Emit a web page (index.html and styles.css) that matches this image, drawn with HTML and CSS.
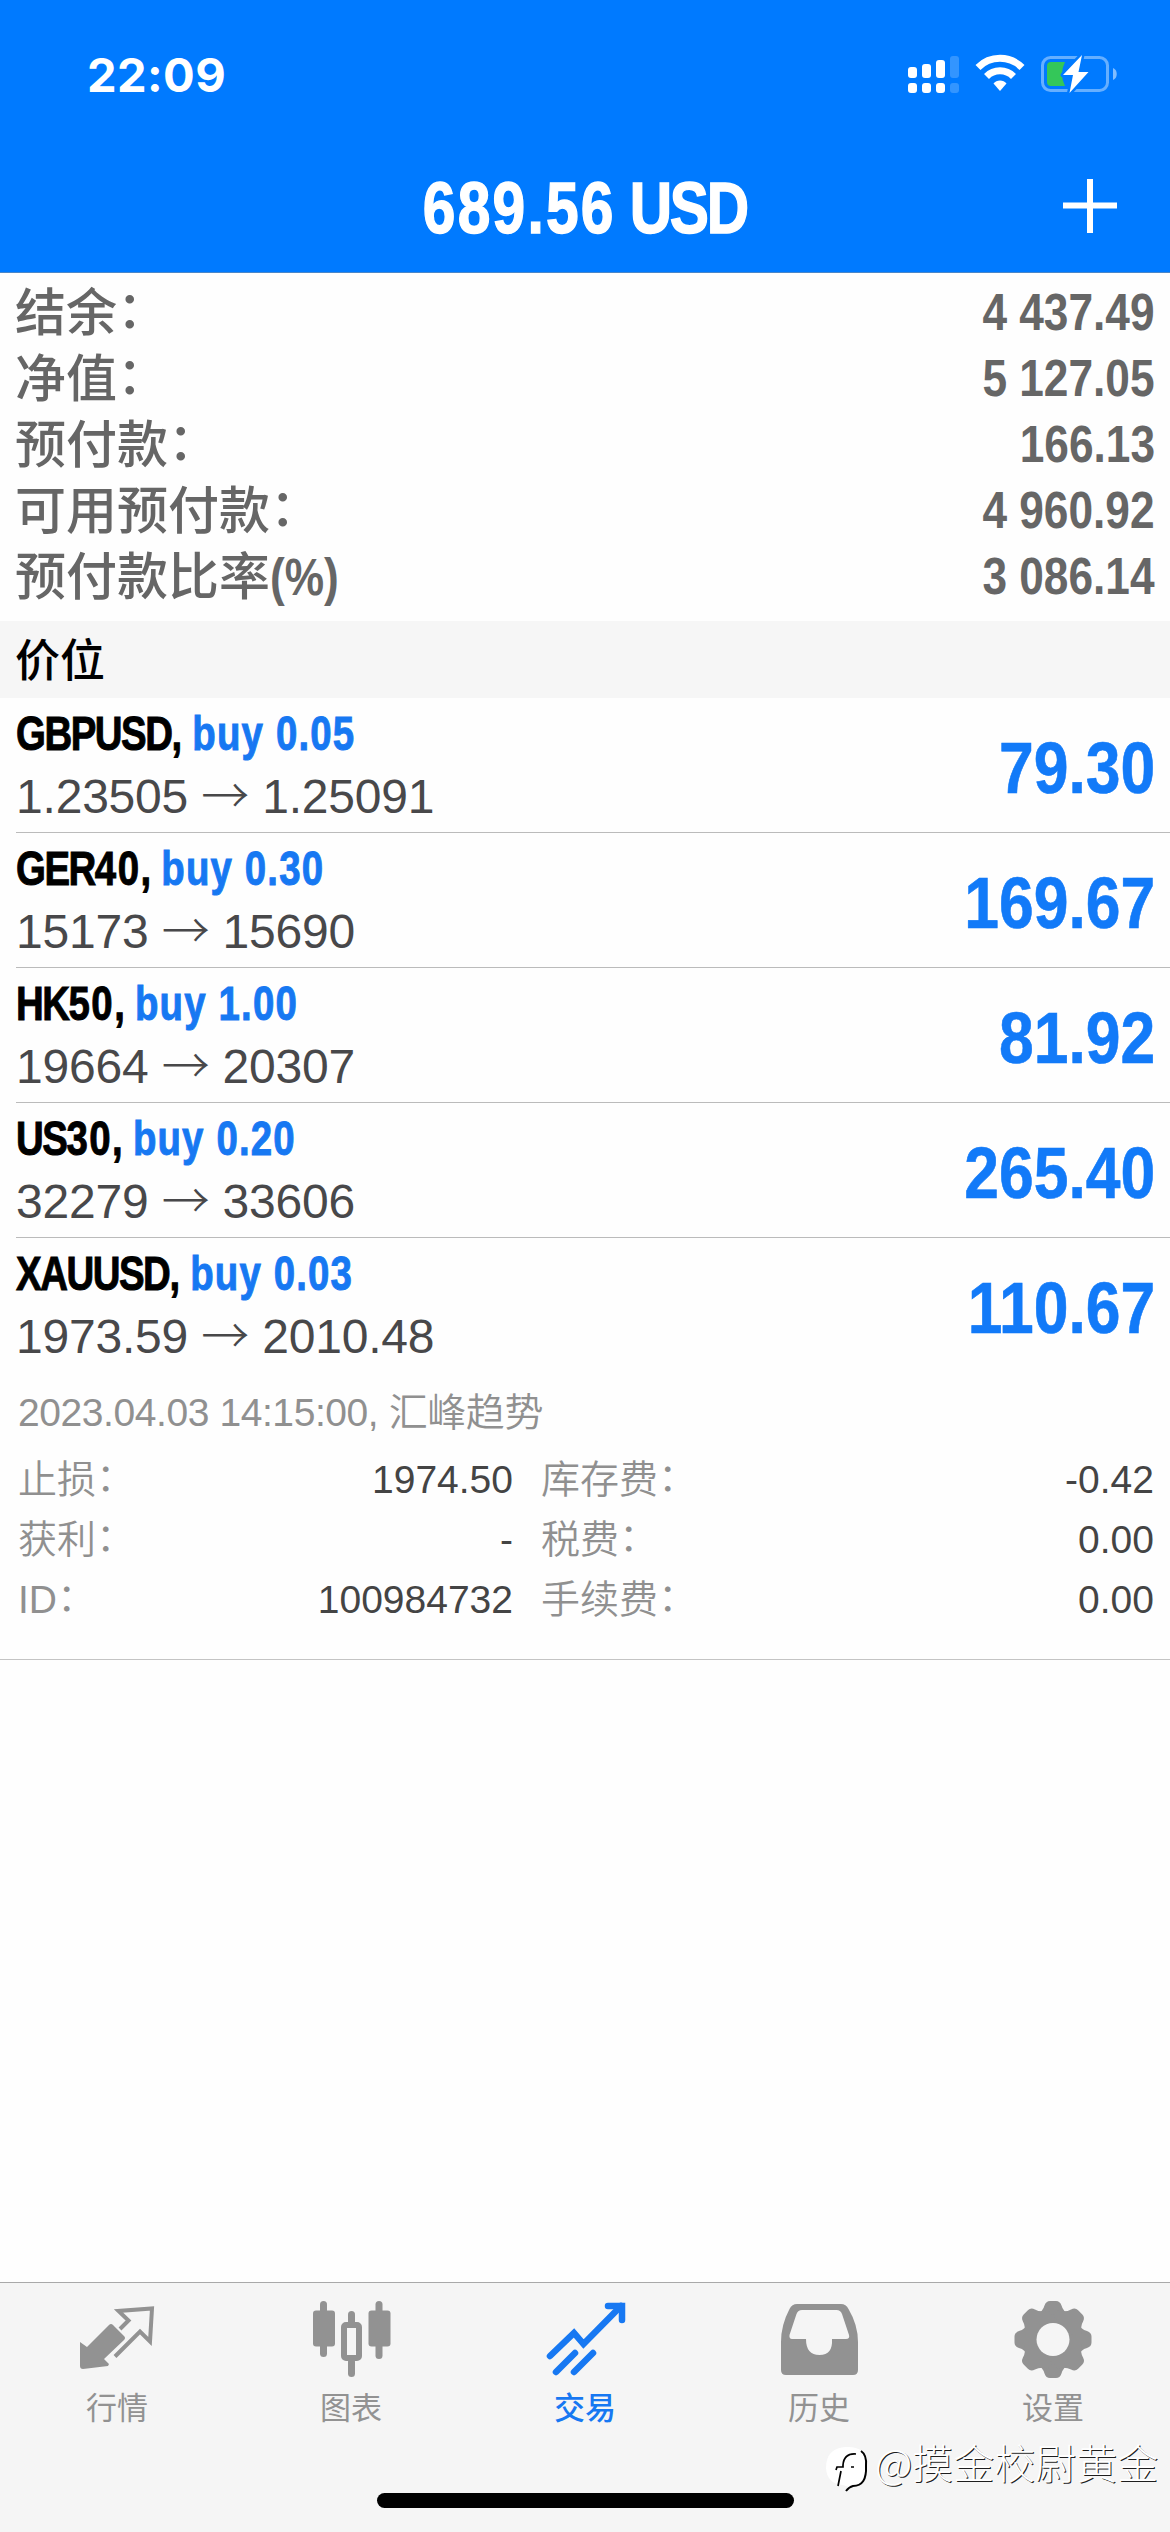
FILE: index.html
```html
<!DOCTYPE html>
<html lang="zh-CN">
<head>
<meta charset="utf-8">
<title>交易</title>
<link rel="stylesheet" href="styles.css">
</head>
<body>
<div class="screen">
  <header class="top">
    <div class="status">
      <span class="time">22:09</span>
      <svg class="status-icons" width="222" height="48" viewBox="0 0 222 48">
        <g fill="#fff">
          <rect x="2" y="15" width="9" height="11" rx="3"/><rect x="16" y="12" width="9" height="14" rx="3"/><rect x="30" y="8" width="9" height="18" rx="3"/>
          <rect x="2" y="31" width="9" height="10" rx="3"/><rect x="16" y="31" width="9" height="10" rx="3"/><rect x="30" y="31" width="9" height="10" rx="3"/>
          <g opacity=".2"><rect x="44" y="4" width="9" height="22" rx="3"/><rect x="44" y="31" width="9" height="10" rx="3"/></g>
        </g>
        <g fill="none" stroke="#fff" stroke-width="7"><path d="M72 15.500a31 31 0 0 1 44 0"/><path d="M80.500 24.500a19 19 0 0 1 27 0"/></g>
        <path d="M94 39l-6.500-7.500c3-4 10-4 13 0z" fill="#fff"/>
        <rect x="136.500" y="5.500" width="65" height="33" rx="8" fill="none" stroke="#fff" stroke-opacity=".4" stroke-width="3"/>
        <path d="M207 16c5 1.500 5 10.500 0 12z" fill="#fff" fill-opacity=".5"/>
        <path d="M145 10h14q-6 12 0 24h-14q-4 0-4-4v-16q0-4 4-4z" fill="#34c759"/>
        <path d="M176 3l-19 20h10l-3.500 18 19-21h-10z" fill="#fff" stroke="#007aff" stroke-width="5" paint-order="stroke" stroke-linejoin="round"/>
      </svg>
    </div>
    <div class="nav">
      <h1 class="title"><span class="mix"><span class="num">689.56</span> USD</span></h1>
      <svg class="plus" width="54" height="54" viewBox="0 0 54 54"><path d="M0 26.500h54M27 0v54" stroke="#fff" stroke-width="6"/></svg>
    </div>
  </header>

  <dl class="summary">
    <div><dt>结余<span class="c">：</span></dt><dd><span class="cond">4 437.49</span></dd></div>
    <div><dt>净值<span class="c">：</span></dt><dd><span class="cond">5 127.05</span></dd></div>
    <div><dt>预付款<span class="c">：</span></dt><dd><span class="cond">166.13</span></dd></div>
    <div><dt>可用预付款<span class="c">：</span></dt><dd><span class="cond">4 960.92</span></dd></div>
    <div><dt>预付款比率<span class="cond pct">(%)</span></dt><dd><span class="cond">3 086.14</span></dd></div>
  </dl>

  <h2 class="section">价位</h2>

  <ul class="positions">
    <li class="row"><div class="info"><p class="sym"><span class="mix">GBPUSD, <b>buy 0.05</b></span></p><p class="px">1.23505 <i>→</i> 1.25091</p></div><div class="profit"><span class="cond">79.30</span></div></li>
    <li class="row"><div class="info"><p class="sym"><span class="mix">GER<span class="num">40</span>, <b>buy 0.30</b></span></p><p class="px">15173 <i>→</i> 15690</p></div><div class="profit"><span class="cond">169.67</span></div></li>
    <li class="row"><div class="info"><p class="sym"><span class="mix">HK<span class="num">50</span>, <b>buy 1.00</b></span></p><p class="px">19664 <i>→</i> 20307</p></div><div class="profit"><span class="cond">81.92</span></div></li>
    <li class="row"><div class="info"><p class="sym"><span class="mix">US<span class="num">30</span>, <b>buy 0.20</b></span></p><p class="px">32279 <i>→</i> 33606</p></div><div class="profit"><span class="cond">265.40</span></div></li>
    <li class="row last"><div class="info"><p class="sym"><span class="mix">XAUUSD, <b>buy 0.03</b></span></p><p class="px">1973.59 <i>→</i> 2010.48</p></div><div class="profit"><span class="cond">110.67</span></div></li>
  </ul>

  <section class="details">
    <p class="opened">2023.04.03 14:15:00, <span class="cn">汇峰趋势</span></p>
    <div class="grid">
      <span class="k">止损<span class="c">：</span></span><span class="v">1974.50</span><span class="k">库存费<span class="c">：</span></span><span class="v">-0.42</span>
      <span class="k">获利<span class="c">：</span></span><span class="v">-</span><span class="k">税费<span class="c">：</span></span><span class="v">0.00</span>
      <span class="k">ID<span class="c">：</span></span><span class="v">100984732</span><span class="k">手续费<span class="c">：</span></span><span class="v">0.00</span>
    </div>
  </section>

  <nav class="tabs">
    <a class="tab"><svg width="78" height="78" viewBox="0 0 78 78"><path d="M2 35l7 5 22-22q2-2 4 0l11 11q2 2 0 4L26 52l5 5-1 2-25 3q-3 0-3-3z" fill="#929292"/><path d="M42 22l8.500-8.500-10-9.500 33.500-2.500-2 33-10-10-25 25" fill="none" stroke="#929292" stroke-width="4"/></svg><span>行情</span></a>
    <a class="tab"><svg width="78" height="78" viewBox="0 0 78 78"><g fill="#929292"><rect x="8" y="-6" width="7" height="56" rx="3.500"/><rect x="1" y="3.500" width="22" height="36" rx="3"/><rect x="63.500" y="-6" width="7" height="58" rx="3.500"/><rect x="56.500" y="3.500" width="22" height="36" rx="3"/><rect x="36" y="4" width="7" height="14" rx="3.500"/><rect x="36" y="51" width="7" height="19" rx="3.500"/></g><rect x="32" y="18" width="15" height="33" rx="2" fill="none" stroke="#929292" stroke-width="6"/></svg><span>图表</span></a>
    <a class="tab on"><svg width="78" height="78" viewBox="0 0 78 78"><g fill="none" stroke="#1778f2" stroke-width="6.500" stroke-linecap="round"><path d="M4 49L28 26l9.500 11L75 -1"/><path d="M62-1h14v14"/><path d="M10 65l19-19M28 65l19-19"/></g></svg><span>交易</span></a>
    <a class="tab"><svg width="78" height="78" viewBox="0 0 78 78"><path fill-rule="evenodd" fill="#929292" d="M17-3h44q5 0 7.500 5Q78 18 78 35v28q0 5-5 5H6q-5 0-5-5V35Q1 18 9.500 2 12-3 17-3zM22 3q-4 0-5.500 4L9.500 28Q9 32 12 32h14q0 16 13.500 16T52 32h14q4 0 3-4L62 7q-1.500-4-5.500-4z"/></svg><span>历史</span></a>
    <a class="tab"><svg width="78" height="78" viewBox="-39 -32.500 78 78"><g fill="#929292"><path id="t" d="M-17-24Q-10-28-8.500-34-7-38.500-3-38.500H3Q7-38.500 8.500-34 10-28 17-24V24Q10 28 8.500 34 7 38.500 3 38.500H-3Q-7 38.500-8.500 34-10 28-17 24z"/><use href="#t" transform="rotate(90)"/><use href="#t" transform="rotate(45)"/><use href="#t" transform="rotate(135)"/></g><circle r="16.500" fill="#f5f5f5"/></svg><span>设置</span></a>
  </nav>
  <div class="home"></div>
  <div class="mark"><svg width="44" height="48" viewBox="0 0 44 48"><path d="M20 1Q41 0 41 19v8q0 9-10 13l-8 1-6-2Q1 38 0 22 0 2 20 1z" fill="#fff"/><path d="M35 5q6 4 5 15 1 20-13 20-4 1-7 5" fill="none" stroke="#000" stroke-width="2"/><path d="M30 8q-12-1-13 11v2h-6l-1 3M15 25l-3 15M25 21h3" fill="none" stroke="#000" stroke-width="1.700"/></svg><span>@摸金校尉黄金</span></div>
</div>
</body>
</html>
```
FILE: styles.css
```css
* { box-sizing: border-box; margin: 0; padding: 0; }
body { width: 1170px; background: #fefefe; font-family: "Liberation Sans", "Noto Sans CJK SC", sans-serif; }
.screen { position: relative; width: 1170px; height: 2532px; display: flex; flex-direction: column; background: #fefefe; overflow: hidden; }

/* condensed bold: figures, and words mixed with figures */
.cond { display: inline-block; transform: scaleX(.867); transform-origin: 100% 50%; font-weight: 700; white-space: pre; }
.mix { display: inline-block; transform: scaleX(.8); transform-origin: 0 50%; font-weight: 700; letter-spacing: -.038em; white-space: pre; -webkit-text-stroke: .02em; }
.num { letter-spacing: .038em; }

.top { height: 273px; background: #007aff; border-bottom: 1px solid #4a86c8; color: #fff; }
.status { height: 132px; display: flex; justify-content: space-between; align-items: flex-start; padding: 45px 42px 0 87px; }
.time { font: 700 47px/60px Inter, sans-serif; letter-spacing: .4px; }
.status-icons { margin-top: 7px; }
.nav { display: flex; justify-content: center; align-items: center; position: relative; height: 141px; }
.title { font-size: 72px; line-height: 84px; margin-top: 10px; }
.title .mix { transform: scaleX(.815); transform-origin: 50% 50%; }
.plus { position: absolute; right: 53px; top: 47px; }

.summary { height: 348px; padding: 3px 15px 0; color: #666; font-size: 51px; }
.summary div { display: flex; justify-content: space-between; height: 66px; line-height: 66px; }
.summary dt { font-family: "Noto Sans CJK SC", sans-serif; font-weight: 500; white-space: nowrap; }
.summary dd { padding-top: 4px; }
.c { vertical-align: .06em; line-height: 1; }
.pct { font-family: "Liberation Sans", sans-serif; transform-origin: 0 50%; line-height: 1; }

.section { height: 77px; padding-left: 15px; background: #f6f6f6; font: 500 45px/74px "Noto Sans CJK SC", sans-serif; color: #000; }

.positions { list-style: none; padding-left: 16px; }
.row { height: 135px; display: flex; justify-content: space-between; padding-right: 15px; border-bottom: 1px solid #bbb; }
.row.last { border-bottom: 0; }
.info { padding-top: 6px; }
.sym { height: 61px; font-size: 48px; line-height: 60px; color: #000; }
.sym b { margin-left: 3px; color: #1778f2; letter-spacing: .03em; }
.px { height: 64px; font-size: 48px; line-height: 64px; letter-spacing: -.2px; color: #48484a; white-space: nowrap; }
.px i { font-family: "Noto Sans CJK SC", sans-serif; font-style: normal; font-weight: 300; line-height: 1; }
.profit { font-size: 72px; line-height: 141px; color: #127af8; }
.profit .cond { -webkit-text-stroke: .6px; }

.details { height: 287px; padding: 9px 16px 0 18px; border-bottom: 1px solid #c4c4c4; font-size: 39px; color: #909090; }
.opened { height: 61px; line-height: 61px; letter-spacing: -.42px; white-space: nowrap; }
.cn, .k { font-weight: 350; }
.grid { display: grid; grid-template-columns: 160px 335px 200px 1fr; margin-top: 7px; }
.grid > span { height: 60px; line-height: 60px; white-space: nowrap; }
.v { text-align: right; color: #444; }
.k:nth-child(4n+3) { padding-left: 28px; }

.tabs { margin-top: auto; height: 250px; display: grid; grid-template-columns: repeat(5, 1fr); background: #f5f5f5; border-top: 1px solid #a9a9a9; }
.tab { display: flex; flex-direction: column; align-items: center; padding-top: 24px; color: #929292; font: 400 31px/41px "Noto Sans CJK SC", sans-serif; }
.tab svg { overflow: visible; }
.on { color: #1778f2; font-weight: 500; }
.home { position: absolute; left: 377px; top: 2493px; width: 417px; height: 15px; border-radius: 8px; background: #000; }
.mark { position: absolute; left: 826px; top: 2446px; display: flex; gap: 5px; color: #fff; font: 300 41px/31px "Noto Sans CJK SC", sans-serif; text-shadow: 1px 1px 0 rgba(0, 0, 0, .9); white-space: nowrap; }
```
